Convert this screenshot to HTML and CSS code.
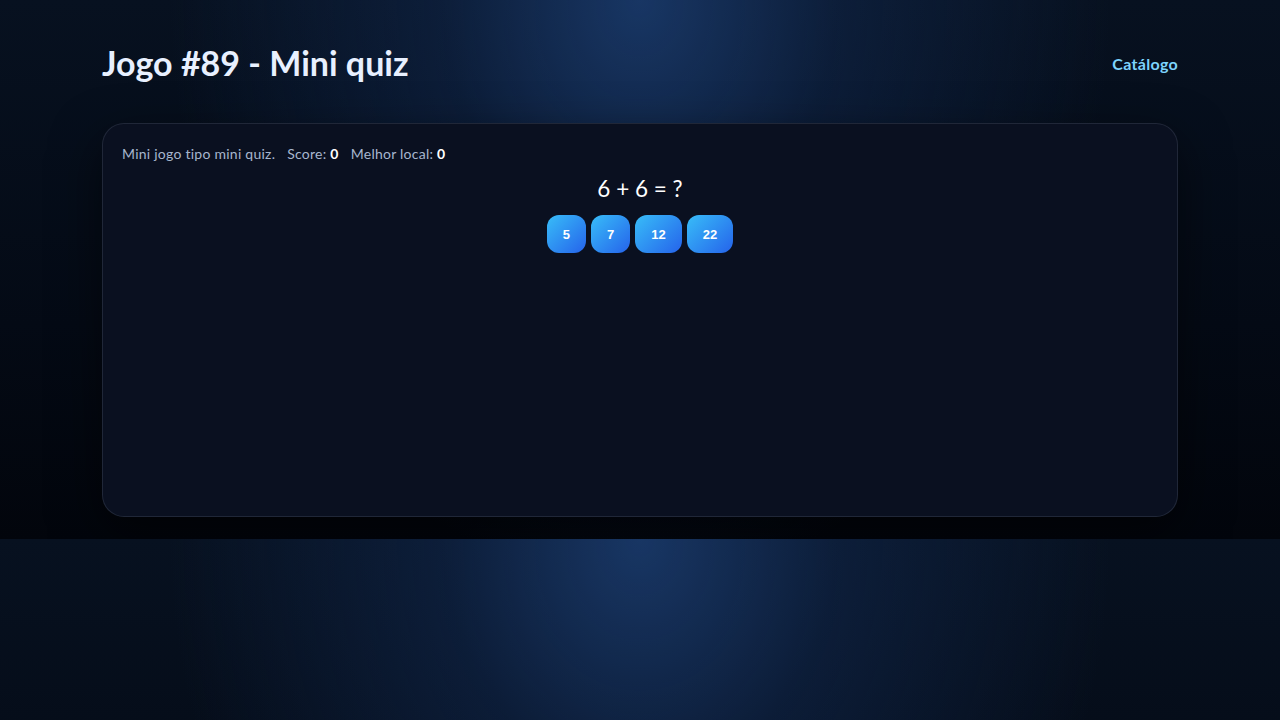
FILE: index.html
```html
<!DOCTYPE html>
<html lang="pt">
<head>
<meta charset="utf-8">
<title>Jogo #89 - Mini quiz</title>
<link rel="stylesheet" href="styles.css">
</head>
<body>
<div class="page">
  <header class="top">
    <h1 class="title">Jogo #89 - Mini quiz</h1>
    <a class="nav-link" href="#">Catálogo</a>
  </header>
  <main class="card">
    <p class="info"><span>Mini jogo tipo mini quiz.</span><span class="stat">Score: <b>0</b></span><span class="stat">Melhor local: <b>0</b></span></p>
    <div class="question">6 + 6 = ?</div>
    <div class="answers">
      <button class="answer">5</button>
      <button class="answer">7</button>
      <button class="answer">12</button>
      <button class="answer">22</button>
    </div>
  </main>
</div>
</body>
</html>
```
FILE: styles.css
```css
body {
  margin: 0;
  font-family: "Trebuchet MS", Lato, "Noto Sans", sans-serif;
  color: #e6eefc;
  background:
    radial-gradient(ellipse 470px 580px at 50% 0%, rgba(24, 54, 100, 1) 0%, rgba(16, 38, 74, 0.6) 42%, rgba(6, 12, 24, 0) 100%),
    linear-gradient(180deg, #071120 0%, #040a15 60%, #02050c 100%);
}

.page {
  max-width: 1076px;
  margin: 0 auto;
  padding: 44px 0 22px;
}

.top {
  display: flex;
  justify-content: space-between;
  align-items: center;
  height: 38px;
}

.title {
  margin: 0;
  font-size: 34px;
  font-weight: 700;
  line-height: 38px;
  color: #e8f0ff;
}

.nav-link {
  color: #7dd3fc;
  font-weight: 700;
  font-size: 16px;
  text-decoration: none;
  letter-spacing: 0.3px;
}

.card {
  display: block;
  box-sizing: border-box;
  margin-top: 41px;
  height: 394px;
  padding: 20px 19px;
  border: 1px solid rgba(148, 163, 184, 0.16);
  border-radius: 22px;
  background: #0a1020;
  box-shadow: 0 18px 50px rgba(0, 0, 0, 0.55);
}

.info {
  margin: 0;
  font-size: 14px;
  line-height: 20px;
  color: #a7b6ce;
  letter-spacing: 0.25px;
}

.info b {
  color: #ffffff;
}

.stat {
  margin-left: 12px;
}

.question {
  margin-top: 13px;
  text-align: center;
  font-size: 22.5px;
  line-height: 24px;
  color: #ffffff;
}

.answers {
  display: flex;
  justify-content: center;
  gap: 5px;
  margin-top: 14px;
}

.answer {
  height: 38px;
  padding: 0 16px;
  border: 0;
  border-radius: 12px;
  background: linear-gradient(135deg, #38bdf8 0%, #2563eb 100%);
  color: #ffffff;
  font-family: "Liberation Sans", Arial, sans-serif;
  font-size: 13px;
  font-weight: 700;
  cursor: pointer;
}
```
